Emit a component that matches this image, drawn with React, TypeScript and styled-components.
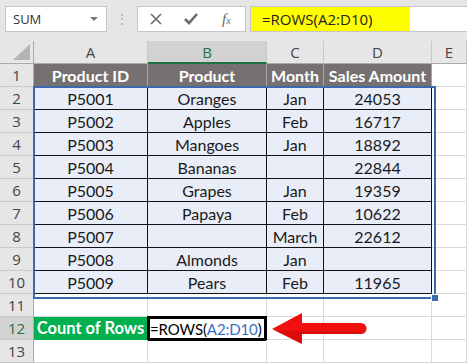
import React from 'react';
import styled, { createGlobalStyle, css } from 'styled-components';

const GlobalStyle = createGlobalStyle`
  html, body {
    margin: 0;
    padding: 0;
    background: #e6e6e6;
    overflow: hidden;
  }
  body {
    font-family: Lato, 'Liberation Sans', sans-serif;
  }
`;

const COLS = '34px 114px 119px 57px 108px 1fr';

type Kind = 'blank' | 'head' | 'data' | 'label' | 'active';

interface CellDef {
  text?: React.ReactNode;
  kind: Kind;
}

const rows: string[][] = [
  ['P5001', 'Oranges', 'Jan', '24053'],
  ['P5002', 'Apples', 'Feb', '16717'],
  ['P5003', 'Mangoes', 'Jan', '18892'],
  ['P5004', 'Bananas', '', '22844'],
  ['P5005', 'Grapes', 'Jan', '19359'],
  ['P5006', 'Papaya', 'Feb', '10622'],
  ['P5007', '', 'March', '22612'],
  ['P5008', 'Almonds', 'Jan', ''],
  ['P5009', 'Pears', 'Feb', '11965'],
];

const App = () => {
  const sheet: CellDef[][] = [
    [
      { text: 'Product ID', kind: 'head' },
      { text: 'Product', kind: 'head' },
      { text: 'Month', kind: 'head' },
      { text: 'Sales Amount', kind: 'head' },
      { kind: 'blank' },
    ],
    ...rows.map((r) => [
      ...r.map((t) => ({ text: t, kind: 'data' as Kind })),
      { kind: 'blank' as Kind },
    ]),
    [1, 2, 3, 4, 5].map(() => ({ kind: 'blank' as Kind })),
    [
      { text: 'Count of Rows', kind: 'label' },
      {
        text: (
          <>
            =ROWS(<Ref>A2:D10</Ref>)
          </>
        ),
        kind: 'active',
      },
      { kind: 'blank' },
      { kind: 'blank' },
      { kind: 'blank' },
    ],
    [1, 2, 3, 4, 5].map(() => ({ kind: 'blank' as Kind })),
  ];

  return (
    <Page>
      <GlobalStyle />
      <Toolbar>
        <NameBox>
          SUM
          <Caret />
        </NameBox>
        <Grip>⋮</Grip>
        <IconBox>
          <svg width="12" height="12" viewBox="0 0 12 12">
            <path d="M1 1 L11 11 M11 1 L1 11" stroke="#6a6a6a" strokeWidth="1.6" />
          </svg>
          <svg width="14" height="12" viewBox="0 0 14 12">
            <path d="M1 6 L5 10 L13 1" stroke="#6a6a6a" strokeWidth="2.6" fill="none" />
          </svg>
          <Fx>
            f<sub>x</sub>
          </Fx>
        </IconBox>
        <FormulaBox>
          <FormulaText>=ROWS(A2:D10)</FormulaText>
        </FormulaBox>
      </Toolbar>

      <Sheet>
        <GridRow>
          <Corner>
            <svg width="17" height="16" viewBox="0 0 17 16">
              <path d="M17 0 L17 16 L0 16 Z" fill="#b4b4b4" />
            </svg>
          </Corner>
          {['A', 'B', 'C', 'D', 'E'].map((c) => (
            <ColHead key={c} selected={c === 'B'}>
              {c}
            </ColHead>
          ))}
        </GridRow>
        {sheet.map((r, i) => (
          <GridRow key={i}>
            <RowHead selected={i + 1 === 12}>{i + 1}</RowHead>
            {r.map((c, j) => (
              <Cell key={j} kind={c.kind}>
                {c.text}
              </Cell>
            ))}
          </GridRow>
        ))}
        <Selection>
          <Handle />
        </Selection>
        <Arrow width="96" height="32" viewBox="0 0 96 32">
          <path
            d="M0 16 L30 0 L30 10 L89 10 A5 5 0 0 1 89 21 L30 21 L30 31 Z"
            fill="#f01010"
          />
          <path d="M30 18 L89 18 A5 5 0 0 1 89 21 L30 21 L30 31 L4 18 Z" fill="#c80808" opacity="0.5" />
        </Arrow>
      </Sheet>
    </Page>
  );
};

const Page = styled.div`
  width: 467px;
  height: 363px;
  background: #e6e6e6;
  overflow: hidden;
`;

const Toolbar = styled.div`
  height: 41px;
  box-sizing: border-box;
  padding-top: 6px;
  padding-left: 5px;
  display: flex;
  align-items: flex-start;
`;

const boxBase = css`
  height: 26px;
  box-sizing: border-box;
  background: #fff;
  border: 1px solid #c6c6c6;
  display: flex;
  align-items: center;
`;

const NameBox = styled.div`
  ${boxBase};
  width: 102px;
  padding-left: 7px;
  font-family: 'Open Sans', sans-serif;
  font-size: 13px;
  color: #333;
  position: relative;
`;

const Caret = styled.span`
  position: absolute;
  right: 8px;
  top: 10px;
  border-left: 4px solid transparent;
  border-right: 4px solid transparent;
  border-top: 4px solid #7a7a7a;
`;

const Grip = styled.div`
  width: 30px;
  text-align: center;
  color: #b0b0b0;
  font-size: 14px;
  line-height: 26px;
`;

const IconBox = styled.div`
  ${boxBase};
  width: 109px;
  padding-left: 12px;
  gap: 22px;
`;

const Fx = styled.span`
  font-family: 'Liberation Serif', serif;
  font-style: italic;
  font-size: 15px;
  color: #666;
  margin-left: 2px;
  sub {
    font-size: 10px;
    vertical-align: baseline;
  }
`;

const FormulaBox = styled.div`
  ${boxBase};
  margin-left: 4px;
  flex: 1;
  border-right: none;
  background: linear-gradient(to right, #ffff00 0, #ffff00 159px, #fff 159px);
`;

const FormulaText = styled.span`
  padding-left: 11px;
  font-family: 'Open Sans', sans-serif;
  font-size: 15px;
  color: #222;
`;

const Sheet = styled.div`
  position: relative;
  background: #fff;
`;

const GridRow = styled.div`
  display: grid;
  grid-template-columns: ${COLS};
  height: 23px;
`;

const headBase = css`
  box-sizing: border-box;
  background: #e6e6e6;
  color: #444;
  font-family: 'Open Sans', sans-serif;
  font-size: 15px;
  display: flex;
  align-items: center;
  justify-content: center;
`;

const Corner = styled.div`
  ${headBase};
  border-right: 1px solid #ababab;
  border-bottom: 1px solid #ababab;
  justify-content: flex-end;
  align-items: flex-end;
  padding: 0 3px 3px 0;
`;

const ColHead = styled.div<{ selected?: boolean }>`
  ${headBase};
  border-right: 1px solid #c8c8c8;
  border-bottom: 1px solid #ababab;
  ${(p) =>
    p.selected &&
    css`
      background: #d2d2d2;
      color: #217346;
      border-bottom: 2px solid #217346;
    `}
`;

const RowHead = styled.div<{ selected?: boolean }>`
  ${headBase};
  border-right: 1px solid #ababab;
  border-bottom: 1px solid #c8c8c8;
  ${(p) =>
    p.selected &&
    css`
      background: #d2d2d2;
      color: #217346;
    `}
`;

const Cell = styled.div<{ kind: Kind }>`
  box-sizing: border-box;
  display: flex;
  align-items: center;
  justify-content: center;
  font-size: 16px;
  color: #1a1a1a;
  white-space: nowrap;
  overflow: visible;
  border-right: 1px solid #dadada;
  border-bottom: 1px solid #dadada;
  ${(p) =>
    p.kind === 'head' &&
    css`
      background: #767171;
      color: #fff;
      font-weight: 700;
      border-right-color: #a8a5a5;
      border-bottom-color: #767171;
    `}
  ${(p) =>
    p.kind === 'data' &&
    css`
      background: #e8edf7;
      border-right-color: #111;
      border-bottom-color: #111;
    `}
  ${(p) =>
    p.kind === 'label' &&
    css`
      background: #00b050;
      color: #fff;
      font-weight: 700;
      font-size: 16.5px;
      border-color: #00b050;
    `}
  ${(p) =>
    p.kind === 'active' &&
    css`
      border: 3px solid #000;
      margin: -1px 0 -1px -1px;
      height: 25px;
      justify-content: flex-start;
      padding-left: 0;
      font-size: 15px;
      letter-spacing: -0.1px;
      color: #000;
    `}
`;

const Ref = styled.span`
  color: #3a6fc4;
`;

const Selection = styled.div`
  position: absolute;
  left: 33px;
  top: 45px;
  width: 399px;
  height: 209px;
  border: 2px solid #3c68b0;
  pointer-events: none;
`;

const Handle = styled.div`
  position: absolute;
  right: -5px;
  bottom: -5px;
  width: 6px;
  height: 6px;
  background: #3c68b0;
  border: 1px solid #fff;
`;

const Arrow = styled.svg`
  position: absolute;
  left: 272px;
  top: 272px;
`;

export default App;
